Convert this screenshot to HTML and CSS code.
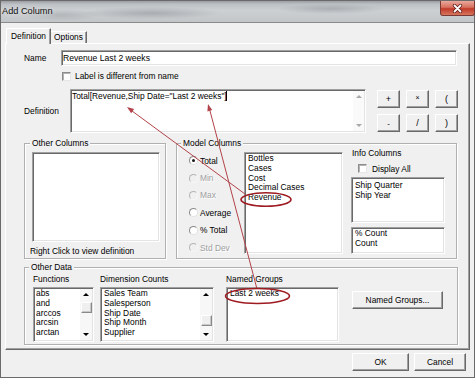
FILE: index.html
```html
<!DOCTYPE html>
<html lang="en">
<head>
<meta charset="utf-8">
<title>Add Column</title>
<link rel="stylesheet" href="styles.css">
</head>
<body>
<div class="window">
  <div class="titlebar">
    <span class="title">Add Column</span>
    <span class="close"><svg width="11" height="9" viewBox="0 0 11 9"><path d="M2.5 1.5 L8.5 7.5 M8.5 1.5 L2.5 7.5" stroke="#5a1a14" stroke-width="3.2" stroke-linecap="round"/><path d="M2.5 1.5 L8.5 7.5 M8.5 1.5 L2.5 7.5" stroke="#fff" stroke-width="1.8" stroke-linecap="round"/></svg></span>
  </div>
  <div class="client">
    <div class="tabs">
      <div class="tab tab-active">Definition</div>
      <div class="tab tab-inactive">Options</div>
    </div>
    <div class="panel">
      <div class="name-row">
        <span class="name-lbl">Name</span>
        <div class="sunken name-field">Revenue Last 2 weeks</div>
      </div>
      <div class="check-row">
        <span class="check"></span>
        <span class="check-lbl">Label is different from name</span>
      </div>
      <div class="def-row">
        <span class="def-lbl">Definition</span>
        <div class="sunken def-field">
          <div class="def-text">Total[Revenue,Ship Date="Last 2 weeks"]<span class="caret"></span></div>
          <div class="vscroll vscroll-off">
            <span class="sb-btn"><span class="tri-up"></span></span>
            <span class="sb-track"></span>
            <span class="sb-btn"><span class="tri-down"></span></span>
          </div>
        </div>
        <div class="ops">
          <span class="btn op">+</span>
          <span class="btn op op-times">×</span>
          <span class="btn op">(</span>
          <span class="btn op op-minus">-</span>
          <span class="btn op">/</span>
          <span class="btn op">)</span>
        </div>
      </div>

      <div class="groups-row">
        <div class="group grp-other">
          <div class="legend legend-oc">Other Columns</div>
          <div class="sunken list oc-list"></div>
          <div class="hint">Right Click to view definition</div>
        </div>
        <div class="group grp-model">
          <div class="legend">Model Columns</div>
          <div class="mc-body">
            <div class="radios">
              <div class="opt"><span class="radio on"></span><span class="opt-lbl">Total</span></div>
              <div class="opt off"><span class="radio"></span><span class="opt-lbl">Min</span></div>
              <div class="opt off"><span class="radio"></span><span class="opt-lbl">Max</span></div>
              <div class="opt"><span class="radio"></span><span class="opt-lbl">Average</span></div>
              <div class="opt"><span class="radio"></span><span class="opt-lbl">% Total</span></div>
              <div class="opt off"><span class="radio"></span><span class="opt-lbl">Std Dev</span></div>
            </div>
            <div class="sunken list mc-list">
              <div>Bottles</div>
              <div>Cases</div>
              <div>Cost</div>
              <div>Decimal Cases</div>
              <div>Revenue</div>
            </div>
            <div class="info">
              <div class="info-lbl">Info Columns</div>
              <div class="info-check"><span class="check"></span><span class="check-lbl2">Display All</span></div>
              <div class="sunken list info-list1">
                <div>Ship Quarter</div>
                <div>Ship Year</div>
              </div>
              <div class="sunken list info-list2">
                <div>% Count</div>
                <div>Count</div>
              </div>
            </div>
          </div>
        </div>
      </div>

      <div class="group grp-data">
        <div class="legend">Other Data</div>
        <div class="od-body">
          <div class="od-col col-fn">
            <div class="col-lbl">Functions</div>
            <div class="sunken list slist fn-list">
              <div class="items">
                <div>abs</div>
                <div>and</div>
                <div>arccos</div>
                <div>arcsin</div>
                <div>arctan</div>
              </div>
              <div class="vscroll">
                <span class="sb-btn"><span class="tri-up"></span></span>
                <span class="sb-track"><span class="thumb thumb-fn"></span></span>
                <span class="sb-btn"><span class="tri-down"></span></span>
              </div>
            </div>
          </div>
          <div class="od-col col-dim">
            <div class="col-lbl">Dimension Counts</div>
            <div class="sunken list slist dim-list">
              <div class="items">
                <div>Sales Team</div>
                <div>Salesperson</div>
                <div>Ship Date</div>
                <div>Ship Month</div>
                <div>Supplier</div>
              </div>
              <div class="vscroll">
                <span class="sb-btn"><span class="tri-up"></span></span>
                <span class="sb-track"><span class="thumb thumb-dim"></span></span>
                <span class="sb-btn"><span class="tri-down"></span></span>
              </div>
            </div>
          </div>
          <div class="od-col col-ng">
            <div class="col-lbl">Named Groups</div>
            <div class="sunken list ng-list">
              <div>Last 2 weeks</div>
            </div>
          </div>
          <span class="btn ng-btn">Named Groups...</span>
        </div>
      </div>
    </div>
    <div class="footer">
      <span class="btn ok-btn">OK</span>
      <span class="btn cancel-btn">Cancel</span>
    </div>
  </div>

  <svg class="annot" width="475" height="378" viewBox="0 0 475 378">
    <g fill="none" stroke="#b2434a" stroke-width="1">
      <line x1="245" y1="194" x2="130" y2="109.5"/>
      <line x1="257" y1="289" x2="209.5" y2="109"/>
    </g>
    <g fill="#b2434a">
      <polygon points="127,107 134.1,109.1 131.2,113.2"/>
      <polygon points="208,104 212.2,110.1 207.4,111.4"/>
    </g>
    <g fill="none" stroke="#9e1b22" stroke-width="1.6">
      <ellipse cx="266" cy="199.5" rx="25" ry="6.8"/>
      <ellipse cx="257.5" cy="296" rx="32" ry="7.5"/>
    </g>
  </svg>
</div>
</body>
</html>
```

FILE: styles.css
```css
* { box-sizing: border-box; }
html, body { margin: 0; padding: 0; }
body {
  width: 475px;
  height: 378px;
  overflow: hidden;
  background: #f0f0f0;
  color: #000;
  font-family: "Liberation Sans", Arial, sans-serif;
  font-size: 8.4px;
}

.window {
  position: relative;
  width: 475px;
  height: 378px;
  border: 1px solid #6a6a6a;
  background: #f0f0f0;
}

/* title bar */
.titlebar {
  display: flex;
  height: 22px;
  border-bottom: 1px solid #8a8a8a;
  background:
    radial-gradient(ellipse 70px 6px at 150px 12px, rgba(80,84,90,.28), transparent),
    radial-gradient(ellipse 55px 5px at 330px 8px, rgba(80,84,90,.25), transparent),
    radial-gradient(ellipse 40px 6px at 60px 14px, rgba(80,84,90,.18), transparent),
    linear-gradient(180deg, #999da2 0, #bcc0c4 3px, #cdd0d3 45%, #c3c6c9 100%);
}
.title {
  padding-left: 1px;
  line-height: 21px;
  font-size: 9.2px;
  color: #111;
  text-shadow: 0 0 5px #e8e8e8;
}
.close {
  margin-left: auto;
  margin-right: -1px;
  width: 35px;
  height: 15px;
  display: flex;
  align-items: center;
  justify-content: center;
  border: 1px solid #7a3a33;
  border-top: none;
  border-radius: 0 0 3px 3px;
  background: linear-gradient(180deg, #e9a99c 0, #d7705f 45%, #c23b2a 55%, #d6765e 100%);
}

/* client area */
.client {
  height: 354px;
  padding: 5px 0 0 4px;
}
.tabs {
  position: relative;
  z-index: 1;
  display: flex;
  height: 16px;
  margin-left: 1px;
}
.tab {
  text-align: center;
  background: #f0f0f0;
  box-shadow: inset -1px 0 #a0a0a0;
}
.tab-active {
  width: 45px;
  height: 16px;
  padding-top: 1px;
  line-height: 13px;
  border-top: 1px solid #fff;
  border-left: 1px solid #fff;
  border-right: 1px solid #696969;
}
.tab-inactive {
  width: 36px;
  height: 12px;
  margin-top: 3px;
  line-height: 11px;
  border-top: 1px solid #fff;
  border-right: 1px solid #696969;
}

.panel {
  width: 465px;
  height: 307px;
  margin-top: -1px;
  padding-left: 18px;
  border: 1px solid;
  border-color: #fff #696969 #696969 #fff;
  box-shadow: inset -1px -1px #a0a0a0;
}

/* sunken controls */
.sunken {
  background: #fff;
  border: 1px solid;
  border-color: #a0a0a0 #fff #fff #a0a0a0;
  box-shadow: inset 1px 1px #696969, inset -1px -1px #e3e3e3;
}

.name-row {
  display: flex;
  align-items: center;
  margin-top: 6px;
  height: 16px;
}
.name-lbl { width: 37px; }
.name-field {
  width: 396px;
  height: 16px;
  padding: 0 0 0 1px;
  line-height: 14px;
  font-size: 8.6px;
}

.check-row {
  display: flex;
  align-items: center;
  margin-top: 6px;
  height: 9px;
}
.check {
  width: 9px;
  height: 9px;
  flex: none;
  background: #fff;
  border: 1px solid;
  border-color: #8c8c8c #e6e6e6 #e6e6e6 #8c8c8c;
  box-shadow: inset 1px 1px #b4b4b4;
}
.check-row .check { margin-left: 38px; }
.check-lbl { margin-left: 4px; line-height: 9px; }

.def-row {
  display: flex;
  align-items: flex-start;
  margin-top: 8px;
  height: 44px;
}
.def-lbl {
  width: 46px;
  align-self: center;
}
.def-field {
  display: flex;
  width: 296px;
  height: 44px;
  padding: 1px;
}
.def-text {
  flex: 1;
  line-height: 10px;
  white-space: nowrap;
}
.caret {
  display: inline-block;
  width: 1px;
  height: 10px;
  margin-left: -1px;
  background: #000;
  vertical-align: top;
}

/* scrollbars */
.vscroll {
  display: flex;
  flex-direction: column;
  width: 12px;
  flex: none;
  background: #f7f7f7;
}
.vscroll-off {
  width: 11px;
  background: #fafafa;
}
.sb-btn {
  height: 11px;
  flex: none;
  display: flex;
  align-items: center;
  justify-content: center;
}
.sb-track { flex: 1; }
.tri-up, .tri-down {
  width: 0;
  height: 0;
  border-left: 3px solid transparent;
  border-right: 3px solid transparent;
}
.tri-up { border-bottom: 3px solid #000; }
.tri-down { border-top: 3px solid #000; }
.vscroll-off .tri-up { border-bottom-color: #a8a8a8; }
.vscroll-off .tri-down { border-top-color: #a8a8a8; }
.thumb {
  display: block;
  height: 11px;
  margin: 0 0 0 1px;
  width: 11px;
  background: #efefef;
  border: 1px solid;
  border-color: #fff #8a8a8a #8a8a8a #fff;
  box-shadow: inset -1px -1px #c8c8c8;
}
.thumb-fn { margin-top: 2px; }
.thumb-dim { margin-top: 15px; }

/* buttons */
.btn {
  display: flex;
  align-items: center;
  justify-content: center;
  background: #f0f0f0;
  border: 1px solid;
  border-color: #fff #696969 #696969 #fff;
  box-shadow: inset -1px -1px #a0a0a0;
}
.ops {
  display: grid;
  grid-template-columns: repeat(3, 23px);
  grid-auto-rows: 18px;
  column-gap: 6px;
  row-gap: 6px;
  margin: 1px 0 0 11px;
}
.op { font-size: 9px; }
.op-times { font-size: 7px; padding-bottom: 4px; }
.op-minus { font-size: 8px; }

/* group boxes */
.group {
  border: 1px solid #b0b0b0;
  box-shadow: inset 1px 1px #fff, 1px 1px #fff;
}
.legend {
  display: table;
  margin: -7px 0 0 4px;
  padding: 0 2px;
  line-height: 12px;
  background: #f0f0f0;
}
.legend-oc { margin-left: 5px; }

.groups-row {
  display: flex;
  gap: 10px;
  margin-top: 10px;
  height: 116px;
}
.grp-other { width: 142px; height: 116px; }
.grp-model { width: 281px; height: 116px; }

.list {
  overflow: hidden;
  line-height: 9.8px;
  white-space: nowrap;
}
.oc-list {
  width: 128px;
  height: 90px;
  margin: 3px 0 0 7px;
}
.hint {
  margin: 3px 0 0 5px;
  line-height: 12px;
}

.mc-body {
  display: flex;
  margin-top: 3px;
}
.radios {
  width: 55px;
  margin-left: 12px;
  display: flex;
  flex-direction: column;
}
.opt {
  height: 17.4px;
  display: flex;
  align-items: center;
}
.radio {
  position: relative;
  width: 9px;
  height: 9px;
  flex: none;
  border-radius: 50%;
  background: #fff;
  border: 1px solid;
  border-color: #8a8a8a #e2e2e2 #e2e2e2 #8a8a8a;
}
.radio.on::after {
  content: "";
  position: absolute;
  left: 2px;
  top: 2px;
  width: 3px;
  height: 3px;
  border-radius: 50%;
  background: #1a1a1a;
}
.opt-lbl { margin-left: 2px; }
.opt.off .radio {
  background: #f0f0f0;
  border-color: #b4b4b4 #f6f6f6 #f6f6f6 #b4b4b4;
}
.opt.off .opt-lbl {
  color: #a0a0a0;
  text-shadow: 1px 1px #fff;
}

.mc-list {
  width: 99px;
  height: 102px;
  padding: 1px 3px;
}
.info {
  margin: -4px 0 0 8px;
  width: 94px;
}
.info-lbl {
  line-height: 10px;
  padding-left: 1px;
}
.info-check {
  display: flex;
  align-items: center;
  height: 9px;
  margin-top: 6px;
}
.info-check .check { margin-left: 7px; }
.check-lbl2 { margin-left: 5px; }
.info-list1 {
  height: 46px;
  margin-top: 4px;
  padding: 3px 3px 0;
}
.info-list2 {
  height: 27px;
  margin-top: 4px;
  padding: 1px 3px 0;
}

/* other data */
.grp-data {
  width: 434px;
  height: 78px;
  margin-top: 8px;
}
.od-body {
  display: flex;
  align-items: flex-start;
  margin-left: 8px;
}
.od-col {
  display: flex;
  flex-direction: column;
}
.col-lbl {
  margin-top: 1px;
  line-height: 10px;
}
.col-fn { width: 61px; }
.col-dim { width: 114px; margin-left: 6px; }
.col-ng { width: 113px; margin-left: 12px; }
.list.ng-list,
.list.slist {
  height: 55px;
  margin-top: 3px;
}
.slist {
  display: flex;
  padding: 1px 1px 1px 2px;
}
.slist .items {
  flex: 1;
  overflow: hidden;
}
.dim-list { padding-left: 3px; }
.ng-list { padding: 1px 3px; }
.ng-btn {
  width: 91px;
  height: 18px;
  margin: 18px 0 0 13px;
}

/* footer */
.footer {
  display: flex;
  justify-content: flex-end;
  gap: 5px;
  margin-top: 3px;
  padding-right: 8px;
}
.ok-btn { width: 57px; height: 18px; }
.cancel-btn { width: 52px; height: 18px; }

/* annotation overlay */
.annot {
  position: absolute;
  left: -1px;
  top: -1px;
  pointer-events: none;
}
```
